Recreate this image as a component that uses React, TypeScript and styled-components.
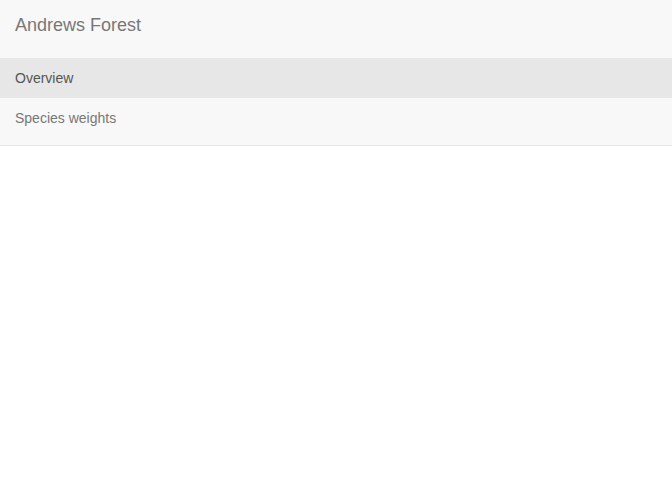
import { createGlobalStyle } from "styled-components";
import styled from "styled-components";

const GlobalStyle = createGlobalStyle`
  html, body {
    margin: 0;
    padding: 0;
    background: #fff;
    font-family: "Liberation Sans", Arial, sans-serif;
    font-size: 14px;
    line-height: 20px;
    color: #333;
  }
  * { box-sizing: border-box; }
`;

const Navbar = styled.nav`
  background-color: #f8f8f8;
  border-bottom: 1px solid #e7e7e7;
`;

const Header = styled.div`
  height: 50px;
  display: flex;
  align-items: center;
`;

const Brand = styled.a`
  padding: 15px;
  font-size: 18px;
  line-height: 20px;
  color: #777;
  text-decoration: none;
`;

const Collapse = styled.div`
  border-top: 1px solid #f8f8f8;
`;

const NavList = styled.ul`
  list-style: none;
  margin: 7px 0;
  padding: 0;
`;

const NavLink = styled.a<{ $active?: boolean }>`
  display: block;
  padding: 10px 15px;
  line-height: 20px;
  font-size: 14px;
  text-decoration: none;
  color: ${(p) => (p.$active ? "#555" : "#777")};
  background-color: ${(p) => (p.$active ? "#e7e7e7" : "transparent")};
`;

const items = [
  { label: "Overview", active: true },
  { label: "Species weights", active: false },
];

export default function App() {
  return (
    <>
      <GlobalStyle />
      <Navbar>
        <Header>
          <Brand href="#">Andrews Forest</Brand>
        </Header>
        <Collapse>
          <NavList>
            {items.map((item) => (
              <li key={item.label}>
                <NavLink href="#" $active={item.active}>
                  {item.label}
                </NavLink>
              </li>
            ))}
          </NavList>
        </Collapse>
      </Navbar>
    </>
  );
}
